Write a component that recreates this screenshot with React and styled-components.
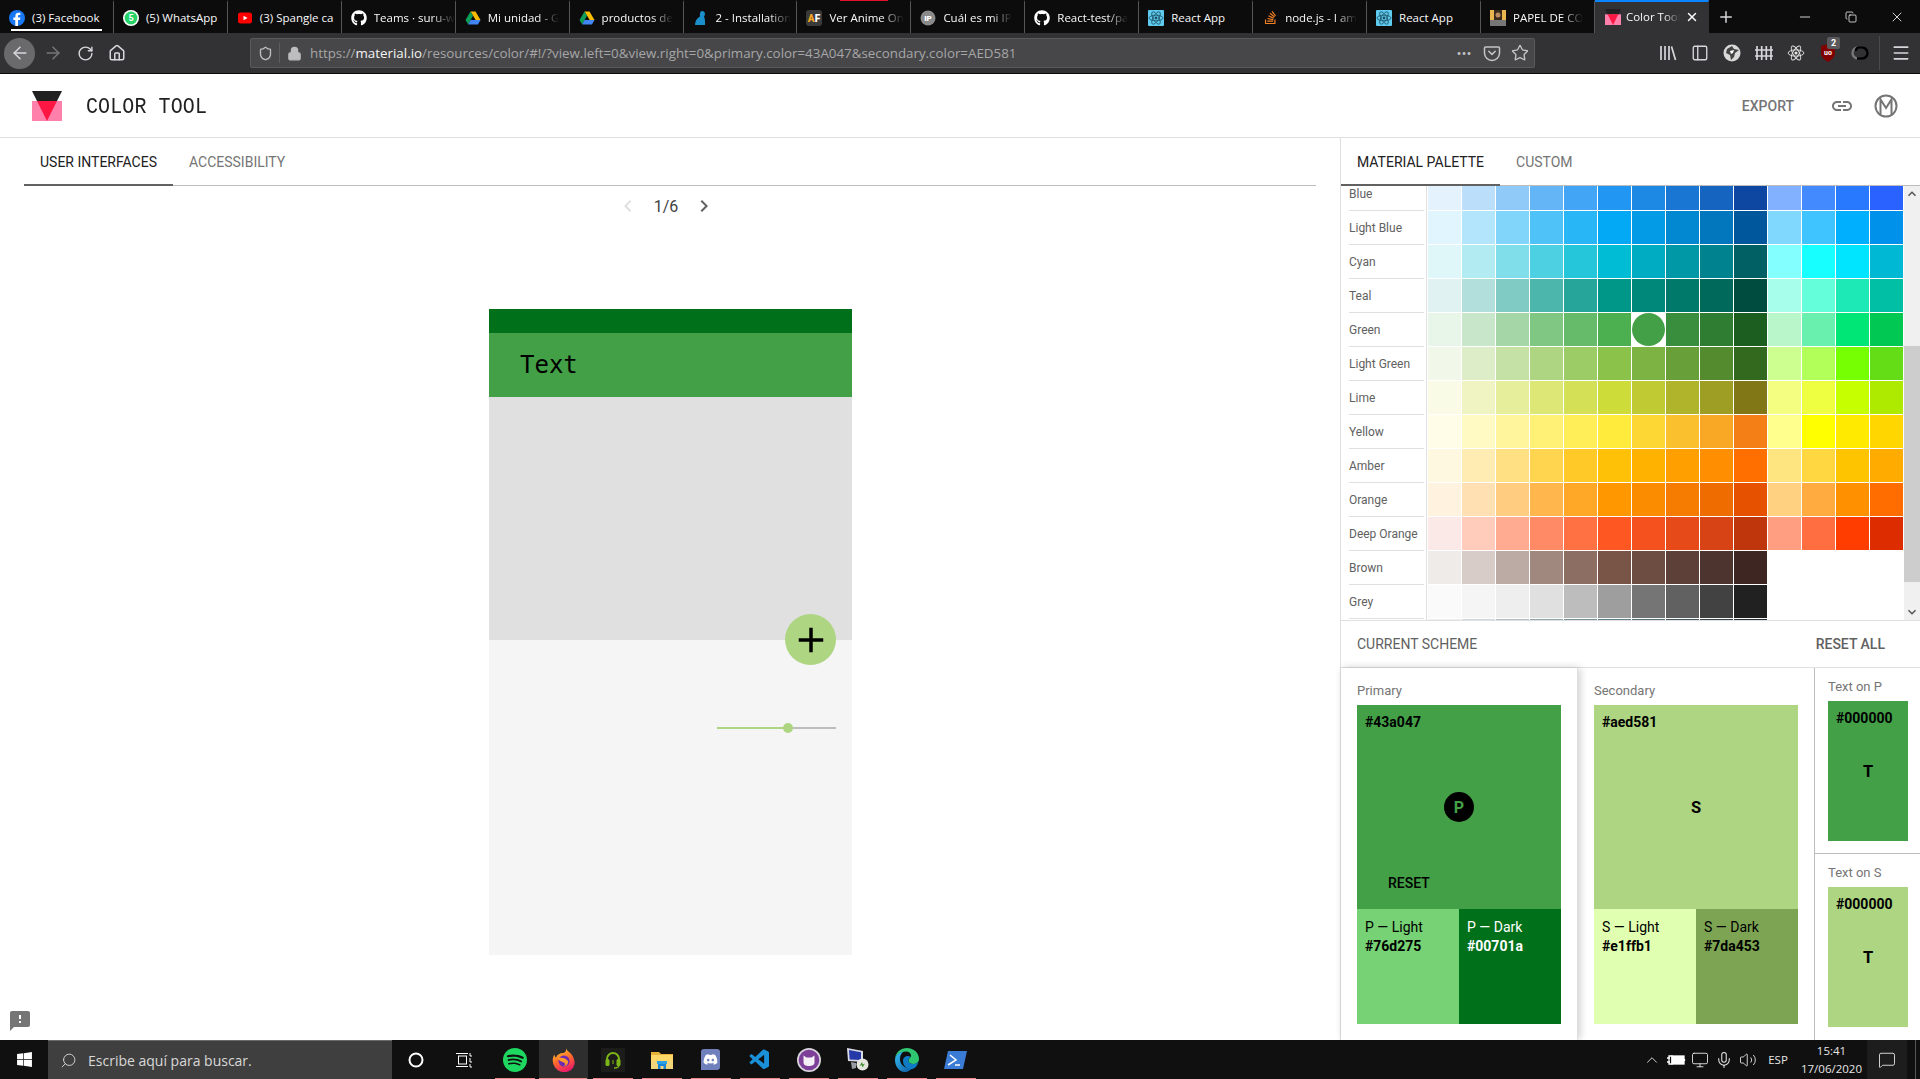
import React from "react";
import styled, { createGlobalStyle } from "styled-components";
import {
  MdLink, MdFeedback, MdChevronLeft, MdChevronRight, MdAdd, MdKeyboardArrowUp, MdKeyboardArrowDown,
} from "react-icons/md";
import { FaGithub, FaStackOverflow, FaDiscord, FaWindows } from "react-icons/fa";
import { SiSpotify } from "react-icons/si";
import { VscVscode } from "react-icons/vsc";
import {
  ArrowLeft, ArrowRight, RotateCw, Home, Shield, Lock, Star, Menu, Minus, X, Plus, Copy, Search, PanelLeft,
  ChevronUp, Mic, Volume2, MessageSquare, Monitor,
} from "lucide-react";

const Global = createGlobalStyle`
  html, body { margin: 0; padding: 0; background: #fff; overflow: hidden; }
  body { font-family: Roboto, "Liberation Sans", sans-serif; }
  * { box-sizing: border-box; }
`;

/* ---------- browser chrome ---------- */
const Page = styled.div`
  width: 1920px; height: 1079px; display: flex; flex-direction: column; overflow: hidden;
`;
const TabStrip = styled.div`
  height: 33px; flex: none; display: flex; background: #0c0c0d; position: relative;
  font-family: "Open Sans", sans-serif; font-size: 11.5px; color: #f9f9fa;
`;
const BrowserTab = styled.div`
  flex: 0 0 113.93px; width: 113.93px; min-width: 0; height: 33px; display: flex; align-items: center; padding-left: ${p => (p.$active ? 10 : 9)}px; gap: ${p => (p.$active ? 5 : 7)}px;
  border-right: 1px solid ${p => (p.$active ? "transparent" : "#55555a")};
  background: ${p => (p.$active ? "#323234" : "transparent")};
  border-top: 2px solid ${p => (p.$active ? "#0a84ff" : "transparent")};
  padding-bottom: ${p => (p.$active ? 2 : 0)}px;
`;
const TabIcon = styled.span`
  flex: 0 0 16px; height: 16px; display: flex; align-items: center; justify-content: center;
`;
const TabLabel = styled.span`
  flex: 0 1 auto; min-width: 0; white-space: nowrap;
  ${p => p.$fade && `
    -webkit-mask-image: linear-gradient(to right, #000 70%, transparent 100%);
    mask-image: linear-gradient(to right, #000 70%, transparent 100%);
  `}
`;
const CloseTab = styled.span`
  flex: none; display: flex; margin-left: auto; margin-right: 9px;
`;
const SoundLine = styled.span`
  position: absolute; left: 11px; top: 29px; width: 91px; height: 2px; background: #fff;
`;
const LoadLine = styled.span`
  position: absolute; left: 840px; top: 0; width: 48px; height: 1px; background: #e1112d;
`;
const NewTab = styled.div`
  flex: 0 0 34px; display: flex; align-items: center; justify-content: center; color: #d7d7db;
`;
const WindowControls = styled.div`
  margin-left: auto; display: flex;
`;
const WinBtn = styled.div`
  width: 46px; height: 33px; display: flex; align-items: center; justify-content: center; color: #f0f0f0;
`;
const Toolbar = styled.div`
  height: 41px; flex: none; display: flex; align-items: center; background: #323234;
  border-bottom: 1px solid #0c0c0d; padding-left: 4px; color: #d7d7db;
`;
const ToolBtn = styled.div`
  flex: 0 0 32px; height: 32px; display: flex; align-items: center; justify-content: center; position: relative;
  color: ${p => p.$dim ? "#77777a" : "#d7d7db"};
`;
const BackBtn = styled(ToolBtn)`
  flex: 0 0 31px; height: 31px; border-radius: 50%; background: #6a6a6c; margin-right: 2px;
`;
const UrlBar = styled.div`
  width: 1285px; height: 30px; margin-left: 117px; background: #474749; border: 1px solid #5a5a5c; border-radius: 2px;
  display: flex; align-items: center; font-family: "Open Sans", sans-serif; font-size: 13.35px; color: #a6a6a8; flex: none;
`;
const UrlIcon = styled.span`
  flex: 0 0 28px; height: 100%; display: flex; align-items: center; justify-content: center; color: #bdbdbf;
`;
const UrlDivider = styled.span`
  width: 1px; height: 20px; background: #5d5d5f; flex: none;
`;
const UrlText = styled.span`
  margin-left: 2px; white-space: nowrap; b { font-weight: 400; color: #f4f4f4; }
`;
const UrlActions = styled.div`
  margin-left: auto; display: flex; align-items: center;
`;
const UrlAction = styled.span`
  width: 28px; display: flex; justify-content: center; color: #c4c4c6;
`;
const ToolRight = styled.div`
  margin-left: 117px; display: flex; align-items: center;
`;
const ToolDivider = styled.span`
  width: 1px; height: 34px; background: #4a4a4c; margin: 0 5px 0 3px;
`;
const Badge = styled.span`
  position: absolute; left: 15px; top: 0; min-width: 13px; height: 12px; border-radius: 2px; background: #5a5a5c;
  color: #fff; font: 700 9px/12px Roboto, sans-serif; text-align: center;
`;

/* ---------- app ---------- */
const AppBar = styled.header`
  height: 64px; flex: none; display: flex; align-items: center; background: #fff;
  border-bottom: 1px solid #e0e0e0; padding-left: 32px;
`;
const Brand = styled.span`
  margin-left: 24px; padding-top: 2px; font-family: "Liberation Mono", monospace; font-size: 20px; color: #212121; line-height: 1;
  letter-spacing: .1px; transform: scaleY(1.12);
`;
const AppActions = styled.div`
  margin-left: auto; display: flex; align-items: center; padding-right: 22px; color: #757575;
`;
const ExportLabel = styled.span`
  font-size: 14px; font-weight: 500; margin-right: 36px;
`;
const ActionIcon = styled.span`
  width: 24px; height: 24px; display: flex; align-items: center; justify-content: center; margin-left: ${p => p.$gap || 0}px;
`;
const Body = styled.div`
  flex: 1; min-height: 0; display: flex;
`;
const Left = styled.main`
  flex: 0 0 1340px; display: flex; flex-direction: column; padding: 0 24px; position: relative;
`;
const TabsRow = styled.div`
  height: 48px; flex: none; display: flex; box-shadow: inset 0 -1px 0 #bdbdbd;
`;
const AppTab = styled.div`
  height: 48px; display: flex; align-items: center; padding: 0 16px; font-size: 14px;
  color: ${p => p.$on ? "#212121" : "#757575"};
  box-shadow: ${p => p.$on ? "inset 0 -2px 0 #616161" : "none"};
`;
const Pager = styled.div`
  height: 40px; display: flex; align-items: center; justify-content: center; gap: 14px; font-size: 16px; color: #424242;
  padding-right: 8px; flex: none;
`;
const PagerIcon = styled.span`
  display: flex; color: ${p => p.$off ? "#e0e0e0" : "#616161"};
`;
const Phone = styled.div`
  width: 363px; height: 646px; margin: 83px 0 0 465px; position: relative; display: flex; flex-direction: column; flex: none;
`;
const PhoneStatus = styled.div`
  height: 24px; background: #00701a;
`;
const PhoneBar = styled.div`
  height: 64px; background: #43a047; display: flex; align-items: center; padding-left: 31px;
  font-family: "DejaVu Sans Mono", monospace; font-size: 24px; color: #000;
`;
const PhoneContent = styled.div`
  height: 243px; background: #e0e0e0;
`;
const PhoneLower = styled.div`
  flex: 1; background: #f5f5f5; padding: 87px 16px 0 0; display: flex; justify-content: flex-end; align-items: flex-start;
`;
const Fab = styled.div`
  position: absolute; right: 16px; top: 305px; width: 51px; height: 51px; border-radius: 50%;
  background: #aed581; color: #000; display: flex; align-items: center; justify-content: center;
`;
const SliderTrack = styled.div`
  width: 119px; height: 2px; background: #bdbdbd; position: relative;
`;
const SliderFill = styled.div`
  height: 2px; background: #aed581;
`;
const SliderKnob = styled.span`
  position: absolute; top: -4px; width: 10px; height: 10px; margin-left: -5px; border-radius: 50%; background: #aed581;
`;
const FeedbackIcon = styled.span`
  display: flex; color: #757575; position: absolute; left: 8px; bottom: 7px;
`;

/* ---------- palette panel ---------- */
const Right = styled.aside`
  flex: 1; display: flex; flex-direction: column; border-left: 1px solid #e0e0e0; min-width: 0;
`;
const PaletteArea = styled.div`
  height: 434px; display: flex; flex: none; overflow: hidden;
`;
const PaletteList = styled.div`
  flex: 1; overflow: hidden; min-width: 0;
`;
const PaletteScroll = styled.div`
  margin-top: -9px;
`;
const PaletteRow = styled.div`
  height: 34px; display: flex;
`;
const RowLabel = styled.div`
  flex: 0 0 86px; margin: 0 1px 0 0; border-right: 1px solid #e0e0e0; padding-left: 8px; font-size: 12px; color: #616161;
`;
const RowLabelInner = styled.div`
  height: 34px; width: 75px; line-height: 34px; border-bottom: 1px solid #e0e0e0; white-space: nowrap;
`;
const Swatch = styled.div`
  flex: 0 0 34px; height: 34px; border-right: 1px solid #fff; border-bottom: 1px solid #fff; background: ${p => p.$c};
`;
const SelectedSwatch = styled.div`
  flex: 0 0 34px; height: 34px; border-right: 1px solid #fff; border-bottom: 1px solid #fff; background: #fff;
  display: flex; align-items: center; justify-content: center;
`;
const SelectedDot = styled.span`
  width: 33px; height: 33px; border-radius: 50%; background: ${p => p.$c};
`;
const Scrollbar = styled.div`
  flex: 0 0 16px; background: #f0f0f0; display: flex; flex-direction: column; color: #505050;
`;
const ScrollArrow = styled.span`
  height: 16px; flex: none; display: flex; align-items: center; justify-content: center;
`;
const ScrollThumb = styled.div`
  height: 236px; margin-top: 144px; background: #cdcdcd; flex: none;
`;
const ScrollEnd = styled(ScrollArrow)`
  margin-top: auto;
`;
const SchemeBar = styled.div`
  height: 48px; flex: none; display: flex; align-items: center; justify-content: space-between;
  border-top: 1px solid #e0e0e0; border-bottom: 1px solid #e0e0e0; padding: 0 35px 0 16px; font-size: 14px; color: #616161;
`;
const ResetAll = styled.span`
  font-weight: 500;
`;
const Cards = styled.div`
  flex: 1; display: flex; min-height: 0;
`;
const SchemeCard = styled.div`
  flex: 0 0 ${p => p.$w}px; padding: 12px 16px 0; position: relative; background: #fff;
  border-right: 1px solid ${p => p.$edge};
  ${p => p.$raised && "box-shadow: 2px 0 8px rgba(0,0,0,.2); z-index: 1;"}
`;
const CardLabel = styled.div`
  font-size: 13px; line-height: 21px; margin-bottom: 4px; color: #757575;
`;
const MainSwatch = styled.div`
  width: 204px; height: 204px; background: ${p => p.$c}; display: grid; grid-template-rows: 1fr auto 1fr; color: #000;
`;
const HexMain = styled.div`
  align-self: start; padding: 7px 8px; font-size: 14px; font-weight: 700; line-height: 20px;
`;
const Letter = styled.div`
  justify-self: center; font-size: 16.5px; font-weight: 700;
`;
const PrimaryDot = styled.div`
  justify-self: center; width: 30px; height: 30px; border-radius: 50%; background: #000; color: #43a047;
  display: flex; align-items: center; justify-content: center; font-size: 16px; font-weight: 700;
`;
const ResetBtn = styled.div`
  align-self: end; padding: 0 0 16px 31px; font-size: 14px; font-weight: 500; line-height: 20px;
`;
const Duo = styled.div`
  display: flex; width: 204px;
`;
const SmallSwatch = styled.div`
  flex: 0 0 102px; height: 115px; background: ${p => p.$c}; color: ${p => p.$ink}; padding: 9px 8px; font-size: 14px; line-height: 18px;
`;
const SmallHex = styled.div`
  font-weight: 700; margin-top: 1px;
`;
const TextCol = styled.div`
  flex: 1; display: flex; flex-direction: column; min-width: 0;
`;
const TextCard = styled.div`
  flex: ${p => p.$last ? "1" : "0 0 186px"}; padding: 8px 13px 0;
  border-bottom: ${p => p.$last ? "0" : "1px solid #bdbdbd"};
`;
const TextLabel = styled.div`
  font-size: 13px; line-height: 22px; margin-bottom: 3px; color: #757575;
`;
const TextSwatch = styled.div`
  width: 80px; height: 140px; background: ${p => p.$c}; color: #000; display: grid; grid-template-rows: 1fr auto 1fr;
`;
const TextHex = styled.div`
  padding: 7px 8px; font-size: 14px; font-weight: 700; line-height: 20px; white-space: nowrap;
`;

/* ---------- taskbar ---------- */
const Taskbar = styled.footer`
  height: 39px; flex: none; display: flex; align-items: stretch; background: #101010; color: #fff;
  font-family: "Open Sans", sans-serif; position: relative; z-index: 2;
`;
const StartBtn = styled.div`
  flex: 0 0 48px; display: flex; align-items: center; justify-content: center;
`;
const SearchBox = styled.div`
  flex: 0 0 344px; background: #3f3f3f; border-top: 1px solid #6b6b6b; display: flex; align-items: center; padding-left: 12px;
  gap: 11px; font-size: 14px; color: #d8d8d8;
`;
const FlipSearch = styled(Search)`
  transform: scaleX(-1);
`;
const TaskIcon = styled.div`
  flex: 0 0 48px; display: flex; align-items: center; justify-content: center;
`;
const AppIcons = styled.div`
  display: flex; margin-left: 2px;
`;
const AppIcon = styled.div`
  flex: 0 0 49px; display: flex; align-items: center; justify-content: center; position: relative;
  background: ${p => p.$on ? "#2e2e2e" : "transparent"};
  &::after {
    content: ""; position: absolute; left: ${p => p.$on ? 0 : 5}px; right: ${p => p.$on ? 1 : 4}px; bottom: 0; height: 1px; background: #f08a8a;
  }
`;
const DiscordTile = styled.span`
  width: 19px; height: 21px; border-radius: 3px 3px 3px 0; background: #6f80bd; display: flex; align-items: center; justify-content: center; color: #fff;
`;
const Tray = styled.div`
  margin-left: auto; display: flex; align-items: center; color: #e6e6e6;
`;
const TrayIcon = styled.span`
  flex: 0 0 ${p => p.$w || 24}px; display: flex; justify-content: center; align-items: center; font-size: 11.5px;
`;
const Clock = styled.div`
  flex: 0 0 71px; text-align: center; font-size: 11.5px; line-height: 18px; white-space: nowrap;
`;
const Notify = styled.div`
  flex: 0 0 40px; height: 39px; background: #1d1d1d; display: flex; align-items: center; justify-content: center;
`;
const ShowDesktop = styled.div`
  flex: 0 0 13px; height: 39px; position: relative;
  &::after { content: ""; position: absolute; left: 8px; top: 0; bottom: 0; width: 1px; background: #555; }
`;

/* ---------- drawings ---------- */
const ColorLogo = ({ size = 30 }) => (
  <svg width={size} height={size} viewBox="0 0 30 30">
    <rect x="0" y="10" width="30" height="20" fill="#ff80ab" />
    <polygon points="0,0 30,0 25,10 5,10" fill="#212121" />
    <polygon points="5,10 25,10 15,30" fill="#ff1744" />
  </svg>
);
const Fb = () => (
  <svg width="16" height="16" viewBox="0 0 16 16">
    <circle cx="8" cy="8" r="8" fill="#1877f2" />
    <path d="M9 16V10h2l.4-2.4H9V6.2c0-.8.4-1.2 1.2-1.2h1.2V3c-.5-.1-1.2-.2-1.9-.2-2 0-3.1 1.1-3.1 3.1v1.7H4.4V10h1.9v6z" fill="#fff" />
  </svg>
);
const Wa = () => (
  <svg width="16" height="16" viewBox="0 0 16 16">
    <circle cx="8" cy="8" r="8" fill="#fff" />
    <circle cx="8" cy="8" r="6.4" fill="#25d366" />
    <text x="8" y="11" textAnchor="middle" fontSize="9" fontWeight="700" fontFamily="Roboto" fill="#fff">5</text>
  </svg>
);
const Yt = () => (
  <svg width="16" height="16" viewBox="0 0 16 16">
    <rect x="1" y="2.5" width="14" height="11" rx="2.5" fill="#f00" />
    <polygon points="6.5,5.8 10.5,8 6.5,10.2" fill="#fff" />
  </svg>
);
const Drive = () => (
  <svg width="16" height="16" viewBox="0 0 16 16">
    <polygon points="5.5,1.5 10.5,1.5 15.5,10 10.7,10" fill="#fbbc04" />
    <polygon points="5.5,1.5 8,5.8 3.2,14.5 .5,10" fill="#0f9d58" />
    <polygon points="5.5,10 15.5,10 13,14.5 3.2,14.5" fill="#4285f4" />
  </svg>
);
const MuiBird = () => (
  <svg width="16" height="16" viewBox="0 0 16 16">
    <path d="M9 1c2 0 3 1.400 3 3 0 1-.5 1.800-1 2.400.8 1.800 1.300 4.600 1 8.600H2c0-4 2-7 5-8.500C6.800 4.600 6.800 1 9 1z" fill="#1a8fc9" />
  </svg>
);
const AfIcon = () => (
  <svg width="16" height="16" viewBox="0 0 16 16">
    <rect width="16" height="16" rx="3" fill="#3a3a3a" />
    <text x="8" y="12" textAnchor="middle" fontSize="10" fontWeight="900" fontFamily="Roboto">
      <tspan fill="#f5a623">A</tspan><tspan fill="#fff">F</tspan>
    </text>
  </svg>
);
const IpIcon = () => (
  <svg width="16" height="16" viewBox="0 0 16 16">
    <circle cx="8" cy="8" r="7.5" fill="#8a8a8a" />
    <text x="8" y="11" textAnchor="middle" fontSize="8" fontWeight="900" fontFamily="Roboto" fill="#fff">IP</text>
  </svg>
);
const Atom = ({ size = 16, stroke = "#1c4f63", bg }) => (
  <svg width={size} height={size} viewBox="0 0 16 16">
    {bg && <rect width="16" height="16" rx="1" fill={bg} />}
    <g fill="none" stroke={stroke} strokeWidth=".8">
      <ellipse cx="8" cy="8" rx="7" ry="2.8" />
      <ellipse cx="8" cy="8" rx="7" ry="2.8" transform="rotate(60 8 8)" />
      <ellipse cx="8" cy="8" rx="7" ry="2.8" transform="rotate(120 8 8)" />
    </g>
    <circle cx="8" cy="8" r="1.4" fill={stroke} />
  </svg>
);
const Thumb = () => (
  <svg width="16" height="16" viewBox="0 0 16 16">
    <rect width="16" height="16" fill="#e8b54e" />
    <rect x="4" y="0" width="8" height="10" fill="#3a2a1e" />
    <rect x="0" y="10" width="16" height="6" fill="#777" />
    <circle cx="8" cy="5" r="2.500" fill="#b98a5f" />
  </svg>
);
const Pocket = () => (
  <svg width="18" height="18" viewBox="0 0 18 18" fill="none" stroke="currentColor" strokeWidth="1.500">
    <path d="M2.500 3h13c.6 0 1 .4 1 1v5a7.500 7.500 0 0 1-15 0V4c0-.6.4-1 1-1z" />
    <path d="M5.800 7.300 9 10.400l3.200-3.100" strokeLinecap="round" strokeLinejoin="round" />
  </svg>
);
const LibraryIcon = () => (
  <svg width="18" height="18" viewBox="0 0 18 18" fill="none" stroke="currentColor" strokeWidth="2">
    <path d="M2 2v14M6 2v14M10 2v14M12.500 2.500l4 13.500" strokeWidth="1.700" />
  </svg>
);
const Fence = () => (
  <svg width="18" height="18" viewBox="0 0 18 18" fill="none" stroke="currentColor" strokeWidth="1.700">
    <path d="M2 2v14M6.700 2v14M11.300 2v14M16 2v14M0 6h18M0 12h18" />
  </svg>
);
const Globe = () => (
  <svg width="18" height="18" viewBox="0 0 18 18">
    <circle cx="9" cy="9" r="8.500" fill="#d9d9d9" />
    <path d="M4 5l5-3 2 3 5 1-4 3-1 4-3 3-1-5-4-2z" fill="#444" />
    <path d="M7 7l4-1-1 3-2 1z" fill="#fff" />
  </svg>
);
const UBlock = () => (
  <svg width="16" height="18" viewBox="0 0 16 18">
    <path d="M8 0l7 2v7c0 4-3.500 7-7 9-3.500-2-7-5-7-9V2z" fill="#800000" />
    <text x="8" y="10.500" textAnchor="middle" fontSize="7" fontWeight="700" fontFamily="Roboto" fill="#fff">uo</text>
  </svg>
);
const SwirlExt = () => (
  <svg width="18" height="18" viewBox="0 0 18 18" fill="none" strokeWidth="2.400">
    <path d="M12 3.500H7a5.500 5.500 0 0 0 0 11h3" stroke="#777" />
    <path d="M6 14.500h5a5.500 5.500 0 0 0 0-11H8a3 3 0 0 0-3 3.500" stroke="#000" />
  </svg>
);
const MCircle = () => (
  <svg width="24" height="24" viewBox="0 0 24 24" fill="none" stroke="#757575" strokeWidth="2">
    <circle cx="12" cy="12" r="10.500" />
    <path d="M6.500 20V5.500L12 14l5.500-8.500V20" />
  </svg>
);
const Cortana = () => (
  <svg width="16" height="16" viewBox="0 0 16 16"><circle cx="8" cy="8" r="6.500" fill="none" stroke="#fff" strokeWidth="2" /></svg>
);
const TaskView = () => (
  <svg width="18" height="18" viewBox="0 0 18 18" fill="none" stroke="#fff" strokeWidth="1">
    <rect x="3.500" y="5" width="8" height="8" />
    <path d="M1 2.500h12M1 15.500h12" />
    <path d="M15 2v3h2M15 7v4h2M15 13v3h2" />
  </svg>
);
const Firefox = () => (
  <svg width="24" height="24" viewBox="0 0 24 24">
    <defs>
      <linearGradient id="ffx" x1="0.2" y1="0" x2="0.6" y2="1">
        <stop offset="0" stopColor="#ffd02f" /><stop offset=".5" stopColor="#ff6a2b" /><stop offset="1" stopColor="#e8186c" />
      </linearGradient>
    </defs>
    <path d="M14 0c.5 3 4 4 6 7 4 6 3 11-.5 14.500-4.500 4-12 3.500-16-1.500C0 15.500 0 10 2.500 6.500 2.600 8 3 9 4 9.500 5 6.500 8 5 11 5c2 0 3.500-2 3-5z" fill="url(#ffx)" />
    <circle cx="12" cy="13" r="5.500" fill="#6b2bb5" />
    <path d="M6 10c4-1 8 0 10 3 .5 3-2 5.500-5 5 2 0 3-2 1.500-3-2-1.500-5.500-1.500-6.500-5z" fill="#ff9a2b" />
  </svg>
);
const Headset = () => (
  <svg width="24" height="24" viewBox="0 0 24 24">
    <rect width="24" height="24" fill="#1c1c1a" />
    <path d="M6 14v-3a6 6 0 0 1 12 0v3" fill="none" stroke="#7cb518" strokeWidth="2" />
    <rect x="4.500" y="11" width="4" height="7" rx="1.500" fill="#7cb518" />
    <rect x="15.500" y="11" width="4" height="7" rx="1.500" fill="#7cb518" />
    <path d="M18 17c0 2-2 3-5 3" fill="none" stroke="#7cb518" strokeWidth="1.300" />
    <rect x="11" y="12" width="2" height="4" fill="#4b6e14" />
  </svg>
);
const Explorer = () => (
  <svg width="22" height="18" viewBox="0 0 22 18">
    <path d="M0 1h8l2 2h12v15H0z" fill="#e8b23a" />
    <rect x="0" y="4" width="22" height="6" fill="#ffd769" />
    <rect x="0" y="10" width="22" height="8" fill="#f2d47a" />
    <rect x="6" y="10" width="10" height="3" fill="#2aa0e6" />
    <path d="M7 18v-5h8v5h-2.500v-3h-3v3z" fill="#1b84d6" />
  </svg>
);
const Cat = () => (
  <svg width="24" height="24" viewBox="0 0 24 24">
    <circle cx="12" cy="12" r="12" fill="#d9d3dc" />
    <circle cx="12" cy="12" r="10.300" fill="#7d3f98" />
    <path d="M6.500 7.500l3 2h5l3-2v7c0 2.500-2.500 3.500-5.500 3.500s-5.500-1-5.500-3.500z" fill="#f4f0f6" />
  </svg>
);
const NetPc = () => (
  <svg width="23" height="23" viewBox="0 0 23 23">
    <path d="M1 0l16 3v11L2 13z" fill="#d9dce6" />
    <path d="M3 2l12 2.300V12L3.600 11.400z" fill="#2438a8" />
    <path d="M5 14l5 1v5l-4 1z" fill="#9a9ca3" />
    <circle cx="16.500" cy="16.500" r="6" fill="#e6e6e0" />
    <path d="M13.500 18l2.500-4 .8 2.500 2.200-1-2.500 4-.8-2.500z" fill="#3f8f2e" />
  </svg>
);
const Edge = () => (
  <svg width="24" height="24" viewBox="0 0 24 24">
    <defs>
      <linearGradient id="edg" x1="0" y1="0" x2="1" y2="1">
        <stop offset="0" stopColor="#35c1f1" /><stop offset="1" stopColor="#0c59a4" />
      </linearGradient>
    </defs>
    <path d="M12 0c7 0 12 5 12 11 0 3.500-3 5-5.500 5-3.500 0-5-1.500-5-3.500 0-2.500 2.500-2.500 2.500-5 0-2-2-4-5-4C5.500 3.500 0 7 0 12 0 4 6 0 12 0z" fill="#2fc671" />
    <path d="M0 12C0 7 5.500 3.500 8.500 3.500 6 5.500 5 8 5 11c0 6 5.500 10.500 12.500 9-2 2-4.500 4-7.500 4-6 0-10-6-10-12z" fill="url(#edg)" />
    <path d="M8 13c0-3 2-5 5-5 1 0 2 .5 2.500 1-1 1-2 1.500-2 3.500s1.500 3.500 5 3.500c2 0 4-1 5-2.500-1 4-3 6.500-6 7.500-5 1-9.500-3-9.500-8z" fill="#0e7bc4" />
  </svg>
);
const PsIcon = () => (
  <svg width="23" height="18" viewBox="0 0 23 18">
    <path d="M4 0h19l-4 18H0z" fill="#3a7bd5" />
    <path d="M6 4l6 5-8 5M11 14h5" fill="none" stroke="#fff" strokeWidth="1.500" />
  </svg>
);
const Plug = () => (
  <svg width="20" height="16" viewBox="0 0 20 16" fill="none" stroke="#fff" strokeWidth="1.300">
    <rect x="6" y="4" width="12" height="8" fill="#fff" />
    <path d="M1 6h3M1 10h3M3 4h3v8H3zM18.500 7v2" />
  </svg>
);

/* ---------- data ---------- */
const palette = [
  ["Blue", "E3F2FD BBDEFB 90CAF9 64B5F6 42A5F5 2196F3 1E88E5 1976D2 1565C0 0D47A1 82B1FF 448AFF 2979FF 2962FF"],
  ["Light Blue", "E1F5FE B3E5FC 81D4FA 4FC3F7 29B6F6 03A9F4 039BE5 0288D1 0277BD 01579B 80D8FF 40C4FF 00B0FF 0091EA"],
  ["Cyan", "E0F7FA B2EBF2 80DEEA 4DD0E1 26C6DA 00BCD4 00ACC1 0097A7 00838F 006064 84FFFF 18FFFF 00E5FF 00B8D4"],
  ["Teal", "E0F2F1 B2DFDB 80CBC4 4DB6AC 26A69A 009688 00897B 00796B 00695C 004D40 A7FFEB 64FFDA 1DE9B6 00BFA5"],
  ["Green", "E8F5E9 C8E6C9 A5D6A7 81C784 66BB6A 4CAF50 43A047 388E3C 2E7D32 1B5E20 B9F6CA 69F0AE 00E676 00C853"],
  ["Light Green", "F1F8E9 DCEDC8 C5E1A5 AED581 9CCC65 8BC34A 7CB342 689F38 558B2F 33691E CCFF90 B2FF59 76FF03 64DD17"],
  ["Lime", "F9FBE7 F0F4C3 E6EE9C DCE775 D4E157 CDDC39 C0CA33 AFB42B 9E9D24 827717 F4FF81 EEFF41 C6FF00 AEEA00"],
  ["Yellow", "FFFDE7 FFF9C4 FFF59D FFF176 FFEE58 FFEB3B FDD835 FBC02D F9A825 F57F17 FFFF8D FFFF00 FFEA00 FFD600"],
  ["Amber", "FFF8E1 FFECB3 FFE082 FFD54F FFCA28 FFC107 FFB300 FFA000 FF8F00 FF6F00 FFE57F FFD740 FFC400 FFAB00"],
  ["Orange", "FFF3E0 FFE0B2 FFCC80 FFB74D FFA726 FF9800 FB8C00 F57C00 EF6C00 E65100 FFD180 FFAB40 FF9100 FF6D00"],
  ["Deep Orange", "FBE9E7 FFCCBC FFAB91 FF8A65 FF7043 FF5722 F4511E E64A19 D84315 BF360C FF9E80 FF6E40 FF3D00 DD2C00"],
  ["Brown", "EFEBE9 D7CCC8 BCAAA4 A1887F 8D6E63 795548 6D4C41 5D4037 4E342E 3E2723"],
  ["Grey", "FAFAFA F5F5F5 EEEEEE E0E0E0 BDBDBD 9E9E9E 757575 616161 424242 212121"],
  ["", "ECEFF1 CFD8DC B0BEC5 90A4AE 78909C 607D8B 546E7A 455A64 37474F 263238"],
];

const tabs = [
  [<Fb />, "(3) Facebook", false],
  [<Wa />, "(5) WhatsApp", false],
  [<Yt />, "(3) Spangle ca", false],
  [<FaGithub size={16} color="#fff" />, "Teams · suru-w", true],
  [<Drive />, "Mi unidad - G", true],
  [<Drive />, "productos de", true],
  [<MuiBird />, "2 - Installation", true],
  [<AfIcon />, "Ver Anime On", true],
  [<IpIcon />, "Cuál es mi IP", true],
  [<FaGithub size={16} color="#fff" />, "React-test/pa", true],
  [<Atom bg="#5ecbef" />, "React App", false],
  [<FaStackOverflow size={15} color="#f48024" />, "node.js - I am", true],
  [<Atom bg="#5ecbef" />, "React App", false],
  [<Thumb />, "PAPEL DE CO", true],
];

export default function App() {
  return (
    <Page>
      <Global />
      <TabStrip>
        {tabs.map(([icon, label, fade], i) => (
          <BrowserTab key={i}>
            <TabIcon>{icon}</TabIcon>
            <TabLabel $fade={fade}>{label}</TabLabel>
          </BrowserTab>
        ))}
        <BrowserTab $active>
          <TabIcon><ColorLogo size={16} /></TabIcon>
          <TabLabel $fade>Color Tool</TabLabel>
          <CloseTab><X size={14} strokeWidth={2.5} /></CloseTab>
        </BrowserTab>
        <NewTab><Plus size={18} /></NewTab>
        <WindowControls>
          <WinBtn><Minus size={16} strokeWidth={1.3} /></WinBtn>
          <WinBtn><Copy size={12} strokeWidth={1.6} /></WinBtn>
          <WinBtn><X size={16} strokeWidth={1.3} /></WinBtn>
        </WindowControls>
        <SoundLine />
        <LoadLine />
      </TabStrip>

      <Toolbar>
        <BackBtn><ArrowLeft size={20} strokeWidth={1.8} /></BackBtn>
        <ToolBtn $dim><ArrowRight size={20} strokeWidth={1.8} /></ToolBtn>
        <ToolBtn><RotateCw size={17} strokeWidth={2} /></ToolBtn>
        <ToolBtn><Home size={18} strokeWidth={2} /></ToolBtn>
        <UrlBar>
          <UrlIcon><Shield size={15} strokeWidth={2.2} /></UrlIcon>
          <UrlDivider />
          <UrlIcon><Lock size={15} fill="currentColor" strokeWidth={2} /></UrlIcon>
          <UrlText>https://<b>material.io</b>/resources/color/#!/?view.left=0&amp;view.right=0&amp;primary.color=43A047&amp;secondary.color=AED581</UrlText>
          <UrlActions>
            <UrlAction>•••</UrlAction>
            <UrlAction><Pocket /></UrlAction>
            <UrlAction><Star size={18} strokeWidth={1.8} /></UrlAction>
          </UrlActions>
        </UrlBar>
        <ToolRight>
          <ToolBtn><LibraryIcon /></ToolBtn>
          <ToolBtn><PanelLeft size={18} strokeWidth={1.8} /></ToolBtn>
          <ToolBtn><Globe /></ToolBtn>
          <ToolBtn><Fence /></ToolBtn>
          <ToolBtn><Atom size={18} stroke="#e4e4e4" /></ToolBtn>
          <ToolBtn><UBlock /><Badge>2</Badge></ToolBtn>
          <ToolBtn><SwirlExt /></ToolBtn>
          <ToolDivider />
          <ToolBtn><Menu size={20} strokeWidth={2} /></ToolBtn>
        </ToolRight>
      </Toolbar>

      <AppBar>
        <ColorLogo />
        <Brand>COLOR TOOL</Brand>
        <AppActions>
          <ExportLabel>EXPORT</ExportLabel>
          <ActionIcon><MdLink size={24} /></ActionIcon>
          <ActionIcon $gap={20}><MCircle /></ActionIcon>
        </AppActions>
      </AppBar>

      <Body>
        <Left>
          <TabsRow>
            <AppTab $on>USER INTERFACES</AppTab>
            <AppTab>ACCESSIBILITY</AppTab>
          </TabsRow>
          <Pager>
            <PagerIcon $off><MdChevronLeft size={24} /></PagerIcon>
            <span>1/6</span>
            <PagerIcon><MdChevronRight size={24} /></PagerIcon>
          </Pager>
          <Phone>
            <PhoneStatus />
            <PhoneBar>Text</PhoneBar>
            <PhoneContent />
            <PhoneLower>
              <SliderTrack>
                <SliderFill style={{ width: "59.7%" }} />
                <SliderKnob style={{ left: "59.7%" }} />
              </SliderTrack>
            </PhoneLower>
            <Fab><MdAdd size={42} /></Fab>
          </Phone>
          <FeedbackIcon><MdFeedback size={24} /></FeedbackIcon>
        </Left>

        <Right>
          <TabsRow>
            <AppTab $on>MATERIAL PALETTE</AppTab>
            <AppTab>CUSTOM</AppTab>
          </TabsRow>
          <PaletteArea>
            <PaletteList>
              <PaletteScroll>
                {palette.map(([name, colors]) => (
                  <PaletteRow key={colors}>
                    <RowLabel><RowLabelInner>{name}</RowLabelInner></RowLabel>
                    {colors.split(" ").map(c =>
                      c === "43A047" ? (
                        <SelectedSwatch key={c}><SelectedDot $c={"#" + c} /></SelectedSwatch>
                      ) : (
                        <Swatch key={c} $c={"#" + c} />
                      )
                    )}
                  </PaletteRow>
                ))}
              </PaletteScroll>
            </PaletteList>
            <Scrollbar>
              <ScrollArrow><MdKeyboardArrowUp size={16} /></ScrollArrow>
              <ScrollThumb />
              <ScrollEnd><MdKeyboardArrowDown size={16} /></ScrollEnd>
            </Scrollbar>
          </PaletteArea>
          <SchemeBar>
            <span>CURRENT SCHEME</span>
            <ResetAll>RESET ALL</ResetAll>
          </SchemeBar>
          <Cards>
            <SchemeCard $w={237} $edge="#e0e0e0" $raised>
              <CardLabel>Primary</CardLabel>
              <MainSwatch $c="#43a047">
                <HexMain>#43a047</HexMain>
                <PrimaryDot>P</PrimaryDot>
                <ResetBtn>RESET</ResetBtn>
              </MainSwatch>
              <Duo>
                <SmallSwatch $c="#76d275" $ink="#000">P — Light<SmallHex>#76d275</SmallHex></SmallSwatch>
                <SmallSwatch $c="#00701a" $ink="#fff">P — Dark<SmallHex>#00701a</SmallHex></SmallSwatch>
              </Duo>
            </SchemeCard>
            <SchemeCard $w={236} $edge="#bdbdbd">
              <CardLabel>Secondary</CardLabel>
              <MainSwatch $c="#aed581">
                <HexMain>#aed581</HexMain>
                <Letter>S</Letter>
              </MainSwatch>
              <Duo>
                <SmallSwatch $c="#e1ffb1" $ink="#000">S — Light<SmallHex>#e1ffb1</SmallHex></SmallSwatch>
                <SmallSwatch $c="#7da453" $ink="#000">S — Dark<SmallHex>#7da453</SmallHex></SmallSwatch>
              </Duo>
            </SchemeCard>
            <TextCol>
              <TextCard>
                <TextLabel>Text on P</TextLabel>
                <TextSwatch $c="#43a047">
                  <TextHex>#000000</TextHex>
                  <Letter>T</Letter>
                </TextSwatch>
              </TextCard>
              <TextCard $last>
                <TextLabel>Text on S</TextLabel>
                <TextSwatch $c="#aed581">
                  <TextHex>#000000</TextHex>
                  <Letter>T</Letter>
                </TextSwatch>
              </TextCard>
            </TextCol>
          </Cards>
        </Right>
      </Body>

      <Taskbar>
        <StartBtn><FaWindows size={17} color="#fff" /></StartBtn>
        <SearchBox>
          <FlipSearch size={17} strokeWidth={1.3} />
          Escribe aquí para buscar.
        </SearchBox>
        <TaskIcon><Cortana /></TaskIcon>
        <TaskIcon><TaskView /></TaskIcon>
        <AppIcons>
          <AppIcon><SiSpotify size={24} color="#1ed760" /></AppIcon>
          <AppIcon $on><Firefox /></AppIcon>
          <AppIcon><Headset /></AppIcon>
          <AppIcon><Explorer /></AppIcon>
          <AppIcon><DiscordTile><FaDiscord size={15} /></DiscordTile></AppIcon>
          <AppIcon><VscVscode size={24} color="#1a90d9" /></AppIcon>
          <AppIcon><Cat /></AppIcon>
          <AppIcon><NetPc /></AppIcon>
          <AppIcon><Edge /></AppIcon>
          <AppIcon><PsIcon /></AppIcon>
        </AppIcons>
        <Tray>
          <TrayIcon><ChevronUp size={18} strokeWidth={1.2} /></TrayIcon>
          <TrayIcon><Plug /></TrayIcon>
          <TrayIcon><Monitor size={18} strokeWidth={1.2} /></TrayIcon>
          <TrayIcon><Mic size={18} strokeWidth={1.4} /></TrayIcon>
          <TrayIcon><Volume2 size={18} strokeWidth={1.2} /></TrayIcon>
          <TrayIcon $w={36}>ESP</TrayIcon>
          <Clock>15:41<br />17/06/2020</Clock>
          <Notify><MessageSquare size={18} strokeWidth={1.2} /></Notify>
          <ShowDesktop />
        </Tray>
      </Taskbar>
    </Page>
  );
}
